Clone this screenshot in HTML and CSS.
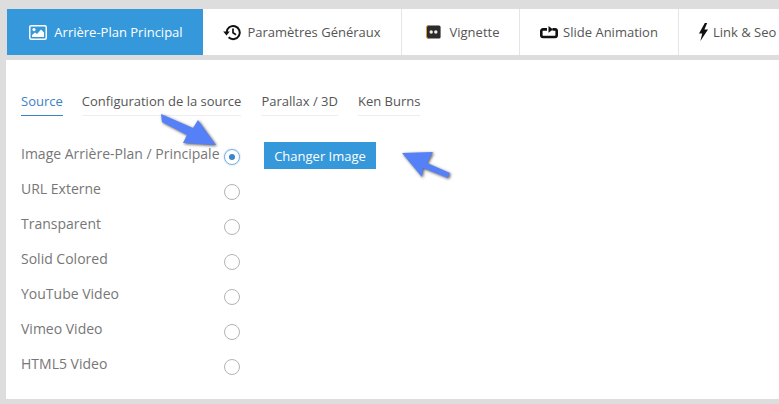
FILE: index.html
```html
<!DOCTYPE html>
<html lang="fr">
<head>
  <meta charset="UTF-8" />
  <title>Arrière-Plan Principal</title>
  <link rel="stylesheet" href="styles.css">
</head>
<body>

  <nav class="tabs">
    <div class="tab tab-active tab-bg">
      <svg class="tab-icon" width="18" height="15" viewBox="0 0 18 15"><rect x="0.75" y="0.75" width="16.5" height="13.5" rx="1.5" fill="none" stroke="#fff" stroke-width="1.5"/><circle cx="5" cy="4.6" r="1.6" fill="#fff"/><path d="M3 12v-2l3-2.5 2 1.5 4-4.5 3 3v4.5z" fill="#fff"/></svg>
      Arrière-Plan Principal
    </div>
    <div class="tab tab-params">
      <svg class="tab-icon" width="19" height="17" viewBox="0 0 19 17"><path d="M3.6 8.5a6.6 6.6 0 1 1 2 4.8" fill="none" stroke="#111" stroke-width="2"/><path d="M0.2 7.6h6.6l-3.3 3.8z" fill="#111"/><path d="M10 4.6v4.2l3 1.9" fill="none" stroke="#111" stroke-width="1.7"/></svg>
      Paramètres Généraux
    </div>
    <div class="tab tab-thumb">
      <svg class="tab-icon" width="15" height="14" viewBox="0 0 15 14"><path d="M2 0.5h11a1.6 1.6 0 0 1 1.6 1.6v9.8a1.6 1.6 0 0 1-1.6 1.6H2z" fill="#2b2b2b"/><path d="M2.4 0.5A1.9 1.9 0 0 0 0.5 2.4v9.2a1.9 1.9 0 0 0 1.9 1.9" fill="#2b2b2b" stroke="#e8973a" stroke-width="1"/><circle cx="5.2" cy="7" r="1.7" fill="#eee"/><circle cx="9.8" cy="7" r="1.7" fill="#eee"/></svg>
      Vignette
    </div>
    <div class="tab tab-anim">
      <svg class="tab-icon" width="18" height="14" viewBox="0 0 18 14"><path d="M7 4.4H3a1.7 1.7 0 0 0-1.7 1.7v4.2A1.7 1.7 0 0 0 3 12h12a1.7 1.7 0 0 0 1.7-1.7V6.100A1.700 1.700 0 0 0 15 4.400h-2.500" fill="none" stroke="#111" stroke-width="2.6"/><path d="M8.500 1l4.500 3.400-4.500 3.400z" fill="#111"/></svg>
      Slide Animation
    </div>
    <div class="tab tab-link">
      <svg class="tab-icon" width="9" height="18" viewBox="0 0 9 18"><path d="M5.800 0L0 10.400h3.200L1.400 18 9 6.600H5.400L8.200 0z" fill="#111"/></svg>
      Link &amp; Seo
    </div>
  </nav>

  <main class="panel">
    <div class="subtabs">
      <div class="subtab subtab-active">Source</div>
      <div class="subtab subtab-config">Configuration de la source</div>
      <div class="subtab">Parallax / 3D</div>
      <div class="subtab">Ken Burns</div>
    </div>

    <div class="content">
      <ul class="sources">
        <li class="source"><span class="source-name">Image Arrière-Plan / Principale</span><span class="radio radio-on"></span></li>
        <li class="source"><span class="source-name">URL Externe</span><span class="radio"></span></li>
        <li class="source"><span class="source-name">Transparent</span><span class="radio"></span></li>
        <li class="source"><span class="source-name">Solid Colored</span><span class="radio"></span></li>
        <li class="source"><span class="source-name">YouTube Video</span><span class="radio"></span></li>
        <li class="source"><span class="source-name">Vimeo Video</span><span class="radio"></span></li>
        <li class="source"><span class="source-name">HTML5 Video</span><span class="radio"></span></li>
      </ul>
      <button class="change-btn">Changer Image</button>
    </div>
  </main>

  <!-- fleches posees par dessus la capture -->
  <svg class="arrow arrow-one" width="70" height="50" viewBox="0 0 70 50">
    <path d="M1 3L33 17 38 9 56 34 23 32 27 24 2 11z" fill="#5580f7"/>
  </svg>
  <svg class="arrow arrow-two" width="60" height="45" viewBox="0 0 60 45">
    <path d="M2 3L33 2 27 13 50 23 48 28 23 18 22 27z" fill="#5580f7"/>
  </svg>

</body>
</html>
```

FILE: styles.css
```css
* {
  box-sizing: border-box;
}

body {
  margin: 0;
  height: 404px;
  overflow: hidden;
  position: relative;
  background-color: #dddddd;
  font-family: 'Open Sans', sans-serif;
  font-size: 13px;
  color: #666666;
  padding: 9px 0 5px 6px;
  display: flex;
  flex-direction: column;
}

.tabs {
  display: flex;
  height: 46px;
  margin-left: 1px;
  background-color: #ffffff;
  flex-shrink: 0;
}

.tab {
  display: flex;
  align-items: center;
  justify-content: center;
  gap: 7px;
  height: 100%;
  border-right: 1px solid #e5e5e5;
  white-space: nowrap;
  color: #555555;
  flex-shrink: 0;
}

.tab-active {
  background-color: #3498db;
  color: #ffffff;
  border-right: none;
}

.tab-bg { width: 196px; gap: 7px; padding-left: 2px; }
.tab-params { width: 199px; gap: 5px; }
.tab-thumb { width: 118px; gap: 9px; padding-left: 4px; }
.tab-anim { width: 159px; gap: 5px; }
.tab-link { width: 100px; gap: 5px; border-right: none; justify-content: flex-start; padding-left: 20px; }

.panel {
  flex: 1;
  margin-top: 5px;
  background-color: #ffffff;
  padding: 29px 15px 0;
}

.subtabs {
  display: flex;
  gap: 20px;
}

.subtab {
  height: 27px;
  line-height: 24px;
  border-bottom: 1px solid #eeeeee;
  color: #555555;
}

.subtab-active {
  color: #3b82c4;
  border-bottom-color: #3b82c4;
}

.subtab-config {
  margin-left: -1px;
}

.content {
  display: flex;
  align-items: flex-start;
  margin-top: 26px;
}

.sources {
  list-style: none;
  margin: 0;
  padding: 0;
  width: 243px;
}

.source {
  display: flex;
  justify-content: space-between;
  height: 35px;
  padding-right: 24px;
}

.source-name {
  line-height: 26px;
  margin-top: -1px;
  font-size: 14px;
  white-space: nowrap;
  color: #777777;
}

.radio {
  width: 16px;
  height: 16px;
  margin-top: 7px;
  flex-shrink: 0;
  border: 1px solid #b4b4b4;
  border-radius: 50%;
  background-color: #ffffff;
}

.radio-on {
  border-color: #7fb4de;
  box-shadow: 0 0 2px #a9cfee;
  position: relative;
}

.radio-on::after {
  content: "";
  position: absolute;
  top: 4px;
  left: 4px;
  width: 6px;
  height: 6px;
  border-radius: 50%;
  background-color: #3b86c6;
}

.change-btn {
  height: 27px;
  width: 112px;
  margin-top: 0;
  border: none;
  background-color: #3498db;
  color: #ffffff;
  font-family: inherit;
  font-size: 13px;
  padding: 0;
}

.arrow {
  position: absolute;
  filter: drop-shadow(1px 1px 1.5px rgba(0, 0, 0, 0.65));
}

.arrow-one {
  left: 160px;
  top: 111px;
}

.arrow-two {
  left: 400px;
  top: 150px;
}
```
